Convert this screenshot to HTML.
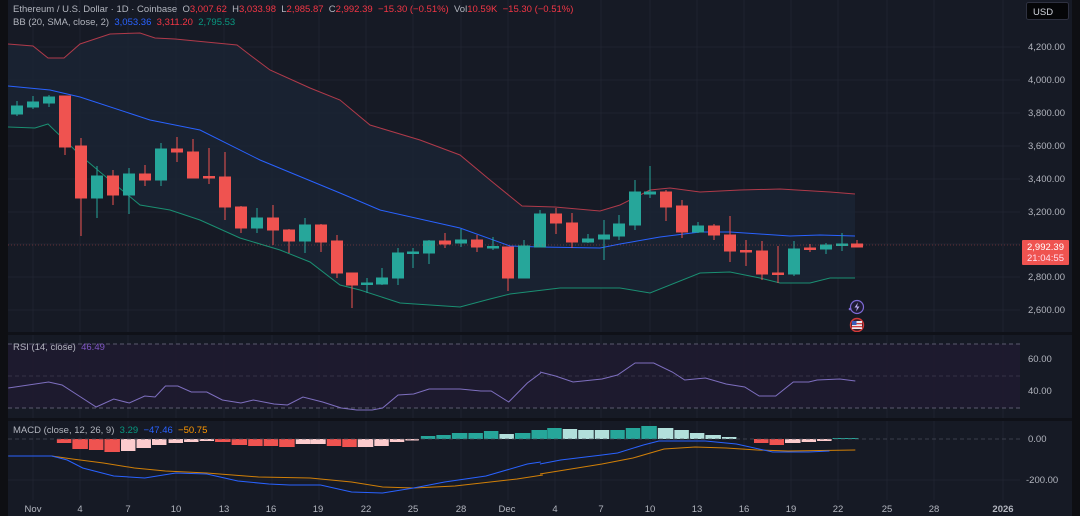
<!DOCTYPE html>
<html><head><meta charset="utf-8"><style>
html,body{margin:0;padding:0;background:#161a25;width:1080px;height:516px;overflow:hidden;font-family:"Liberation Sans",sans-serif}
svg{position:absolute;left:0;top:0}
.t{position:absolute;font-size:9.5px;color:#b2b5be;white-space:nowrap}
.r{color:#f23645}.b{color:#2962ff}.g{color:#089981}.p{color:#7e57c2}.o{color:#ff9800}
</style></head><body>
<svg width="1080" height="516" viewBox="0 0 1080 516" font-family="Liberation Sans" font-size="9.5">
<rect x="0" y="0" width="1080" height="516" fill="#161a25"/>
<g stroke="#1f2330" stroke-width="1">
<line x1="33" y1="0" x2="33" y2="500"/><line x1="80" y1="0" x2="80" y2="500"/><line x1="128" y1="0" x2="128" y2="500"/><line x1="176" y1="0" x2="176" y2="500"/><line x1="224" y1="0" x2="224" y2="500"/><line x1="272" y1="0" x2="272" y2="500"/><line x1="319" y1="0" x2="319" y2="500"/><line x1="366" y1="0" x2="366" y2="500"/><line x1="413" y1="0" x2="413" y2="500"/><line x1="461" y1="0" x2="461" y2="500"/><line x1="508" y1="0" x2="508" y2="500"/><line x1="555" y1="0" x2="555" y2="500"/><line x1="601" y1="0" x2="601" y2="500"/><line x1="650" y1="0" x2="650" y2="500"/><line x1="697" y1="0" x2="697" y2="500"/><line x1="744" y1="0" x2="744" y2="500"/><line x1="791" y1="0" x2="791" y2="500"/><line x1="838" y1="0" x2="838" y2="500"/><line x1="887" y1="0" x2="887" y2="500"/><line x1="934" y1="0" x2="934" y2="500"/><line x1="1003" y1="0" x2="1003" y2="500"/>
<line x1="8" y1="47" x2="1020" y2="47"/><line x1="8" y1="80" x2="1020" y2="80"/><line x1="8" y1="113" x2="1020" y2="113"/><line x1="8" y1="146" x2="1020" y2="146"/><line x1="8" y1="179" x2="1020" y2="179"/><line x1="8" y1="212" x2="1020" y2="212"/><line x1="8" y1="244" x2="1020" y2="244"/><line x1="8" y1="277" x2="1020" y2="277"/><line x1="8" y1="310" x2="1020" y2="310"/>
<line x1="8" y1="480" x2="1020" y2="480"/>
</g>
<polygon fill="#1a2434" fill-opacity="0.85" points="8,44 33,46 48,58 64,58 80,44 110,34 140,33 155,38 175,39 237,45 250,55 270,70 310,88 340,100 370,125 420,140 460,155 490,180 522,206 555,207 600,211 620,205 650,190 670,188 700,192 740,190 780,189 830,192 855,194 855,278 830,278 810,283 780,283 760,278 730,272 700,273 650,293 620,288 560,288 510,294 490,299 460,307 400,303 360,290 340,285 310,262 280,250 240,238 200,220 170,210 140,205 100,172 80,155 48,124 35,128 8,127"/>
<polyline fill="none" stroke="#b03a4a" stroke-width="1" points="8,44 33,46 48,58 64,58 80,44 110,34 140,33 155,38 175,39 237,45 250,55 270,70 310,88 340,100 370,125 420,140 460,155 490,180 522,206 555,207 600,211 620,205 650,190 670,188 700,192 740,190 780,189 830,192 855,194"/>
<polyline fill="none" stroke="#2962ff" stroke-width="1" points="8,86 50,90 80,97 150,120 200,130 260,160 340,193 380,210 460,228 510,246 540,247 600,248 620,244 660,237 700,232 730,232 760,234 790,236 820,235 855,236"/>
<polyline fill="none" stroke="#1a8f72" stroke-width="1" points="8,127 35,128 48,124 80,155 100,172 140,205 170,210 200,220 240,238 280,250 310,262 340,285 360,290 400,303 460,307 490,299 510,294 560,288 620,288 650,293 700,273 730,272 760,278 780,283 810,283 830,278 855,278"/>
<g stroke-width="1">
<g stroke="#26a69a" fill="#26a69a">
<line x1="17" y1="101" x2="17" y2="116"/><rect x="11.5" y="106" width="11" height="8"/>
<line x1="33" y1="96" x2="33" y2="109"/><rect x="27.5" y="102" width="11" height="5"/>
<line x1="49" y1="95" x2="49" y2="107"/><rect x="43.5" y="97" width="11" height="6"/>
<line x1="97" y1="166" x2="97" y2="218"/><rect x="91.5" y="176" width="11" height="22"/>
<line x1="129" y1="168" x2="129" y2="214"/><rect x="123.5" y="174" width="11" height="21"/>
<line x1="161" y1="143" x2="161" y2="186"/><rect x="155.5" y="149" width="11" height="31"/>
<line x1="257" y1="208" x2="257" y2="233"/><rect x="251.5" y="218" width="11" height="10"/>
<line x1="305" y1="218" x2="305" y2="253"/><rect x="299.5" y="225" width="11" height="16"/>
<line x1="367" y1="278" x2="367" y2="293"/><rect x="361.5" y="283" width="11" height="1.5"/>
<line x1="382" y1="268" x2="382" y2="285"/><rect x="376.5" y="278" width="11" height="6"/>
<line x1="398" y1="248" x2="398" y2="285"/><rect x="392.5" y="253" width="11" height="25"/>
<line x1="413" y1="248" x2="413" y2="268"/><rect x="407.5" y="252" width="11" height="1.5"/>
<line x1="429" y1="240" x2="429" y2="264"/><rect x="423.5" y="241" width="11" height="12"/>
<line x1="461" y1="229" x2="461" y2="247"/><rect x="455.5" y="240" width="11" height="3"/>
<line x1="493" y1="237" x2="493" y2="250"/><rect x="487.5" y="246.5" width="11" height="1.5"/>
<line x1="524" y1="240" x2="524" y2="278"/><rect x="518.5" y="246" width="11" height="32"/>
<line x1="540" y1="210" x2="540" y2="247"/><rect x="534.5" y="214" width="11" height="33"/>
<line x1="588" y1="234" x2="588" y2="243"/><rect x="582.5" y="239" width="11" height="3"/>
<line x1="604" y1="220" x2="604" y2="260"/><rect x="598.5" y="235" width="11" height="4"/>
<line x1="619" y1="215" x2="619" y2="240"/><rect x="613.5" y="224" width="11" height="12"/>
<line x1="635" y1="180" x2="635" y2="230"/><rect x="629.5" y="192" width="11" height="33"/>
<line x1="650" y1="166" x2="650" y2="198"/><rect x="644.5" y="192" width="11" height="2"/>
<line x1="698" y1="222" x2="698" y2="233"/><rect x="692.5" y="226" width="11" height="6"/>
<line x1="794" y1="241" x2="794" y2="276"/><rect x="788.5" y="249" width="11" height="25"/>
<line x1="826" y1="243" x2="826" y2="254"/><rect x="820.5" y="245" width="11" height="4"/>
<line x1="842" y1="233" x2="842" y2="251"/><rect x="836.5" y="244" width="11" height="1.5"/>
</g>
<g stroke="#ef5350" fill="#ef5350">
<line x1="65" y1="96" x2="65" y2="155"/><rect x="59.5" y="96" width="11" height="51"/>
<line x1="81" y1="138" x2="81" y2="236"/><rect x="75.5" y="146" width="11" height="52"/>
<line x1="113" y1="170" x2="113" y2="205"/><rect x="107.5" y="176" width="11" height="19"/>
<line x1="145" y1="165" x2="145" y2="186"/><rect x="139.5" y="174" width="11" height="6"/>
<line x1="177" y1="137" x2="177" y2="162"/><rect x="171.5" y="149" width="11" height="3"/>
<line x1="193" y1="139" x2="193" y2="178"/><rect x="187.5" y="152" width="11" height="26"/>
<line x1="209" y1="148" x2="209" y2="184"/><rect x="203.5" y="176.5" width="11" height="1.5"/>
<line x1="225" y1="152" x2="225" y2="220"/><rect x="219.5" y="177" width="11" height="30"/>
<line x1="241" y1="206" x2="241" y2="233"/><rect x="235.5" y="207" width="11" height="21"/>
<line x1="273" y1="205" x2="273" y2="245"/><rect x="267.5" y="218" width="11" height="12"/>
<line x1="289" y1="229" x2="289" y2="253"/><rect x="283.5" y="230" width="11" height="11"/>
<line x1="321" y1="224" x2="321" y2="252"/><rect x="315.5" y="225" width="11" height="17"/>
<line x1="337" y1="235" x2="337" y2="278"/><rect x="331.5" y="241" width="11" height="32"/>
<line x1="352" y1="273" x2="352" y2="308"/><rect x="346.5" y="273" width="11" height="12"/>
<line x1="445" y1="233" x2="445" y2="248"/><rect x="439.5" y="241" width="11" height="3"/>
<line x1="477" y1="235" x2="477" y2="252"/><rect x="471.5" y="240" width="11" height="7"/>
<line x1="508" y1="247" x2="508" y2="291"/><rect x="502.5" y="247" width="11" height="31"/>
<line x1="556" y1="208" x2="556" y2="234"/><rect x="550.5" y="214" width="11" height="9"/>
<line x1="572" y1="213" x2="572" y2="248"/><rect x="566.5" y="223" width="11" height="19"/>
<line x1="666" y1="190" x2="666" y2="221"/><rect x="660.5" y="192" width="11" height="15"/>
<line x1="682" y1="200" x2="682" y2="238"/><rect x="676.5" y="206" width="11" height="26"/>
<line x1="714" y1="224" x2="714" y2="240"/><rect x="708.5" y="226" width="11" height="9"/>
<line x1="730" y1="216" x2="730" y2="262"/><rect x="724.5" y="235" width="11" height="16"/>
<line x1="746" y1="240" x2="746" y2="266"/><rect x="740.5" y="250.5" width="11" height="1.5"/>
<line x1="762" y1="241" x2="762" y2="280"/><rect x="756.5" y="251" width="11" height="23"/>
<line x1="778" y1="246" x2="778" y2="283"/><rect x="772.5" y="273" width="11" height="1.5"/>
<line x1="810" y1="244" x2="810" y2="252"/><rect x="804.5" y="248" width="11" height="1.5"/>
<line x1="857" y1="240" x2="857" y2="247"/><rect x="851.5" y="244" width="11" height="3"/>
</g>
</g>
<line x1="8" y1="245" x2="1020" y2="245" stroke="#ef5350" stroke-opacity="0.35" stroke-dasharray="1 2"/>
<circle cx="857" cy="307" r="6.5" fill="#1e1b33" stroke="#7e6ad6" stroke-width="1.2"/>
<path d="M858 302.5 L854.5 307.5 L857 307.5 L856 311.5 L859.5 306.5 L857 306.5 Z" fill="#b9aaf0"/>
<circle cx="850" cy="309" r="1.3" fill="#7e6ad6"/>
<circle cx="857" cy="325" r="6.5" fill="#3a1e24" stroke="#d33a3a" stroke-width="1.4"/>
<rect x="852" y="321" width="10" height="8" fill="#e8e8f0"/><rect x="852" y="323" width="10" height="1.3" fill="#d04040"/><rect x="852" y="326" width="10" height="1.3" fill="#d04040"/><rect x="852" y="321" width="4.5" height="4" fill="#3a5bb8"/>
<rect x="0" y="332" width="1080" height="3" fill="#0f1118"/>
<rect x="0" y="418" width="1080" height="3" fill="#0f1118"/>
<!-- RSI -->
<rect x="8" y="344" width="1012" height="64" fill="#1e1b30" fill-opacity="0.9"/>
<g stroke="#5a5a6e" stroke-dasharray="4 3" stroke-width="1">
<line x1="8" y1="344" x2="1020" y2="344"/><line x1="8" y1="408" x2="1020" y2="408"/><line x1="8" y1="376" x2="1020" y2="376" stroke-opacity="0.4"/>
</g>
<g transform="matrix(1.034,0,0,1,0,0)">
<polyline fill="none" stroke="#7e6fbf" stroke-width="1" points="8,388 47,382 60,385 78,397 93,407 110,399 125,403 140,396 150,397 160,386 172,386 185,392 200,392 215,400 233,403 245,400 265,404 278,405 293,397 312,402 330,408 345,410 360,410 370,408 385,395 400,394 415,389 445,389 465,391 475,391 492,402 510,383 523,373"/>
<polyline fill="none" stroke="#ff9800" stroke-opacity="0.8" stroke-width="1" points="8,456 50,456 70,459 100,463 130,468 160,471 200,473 250,477 300,478 340,482 370,487 400,488 440,486 500,479 525,475"/>
<polyline fill="none" stroke="#2962ff" stroke-width="1" points="8,456 50,456 65,460 80,468 110,476 140,478 170,473 200,474 230,481 260,484 280,485 310,485 340,492 370,493 400,488 430,482 470,476 510,464 523,462"/>
<g>
<rect x="55" y="439" width="14" height="4" fill="#ef5350"/><rect x="70" y="439" width="15" height="10" fill="#ef5350"/><rect x="86" y="439" width="14" height="11" fill="#ef5350"/><rect x="101" y="439" width="15" height="13" fill="#ef5350"/>
<rect x="117" y="439" width="14" height="12" fill="#fccbcd"/><rect x="132" y="439" width="14" height="9" fill="#fccbcd"/><rect x="147" y="439" width="14" height="6" fill="#fccbcd"/><rect x="163" y="439" width="14" height="4" fill="#fccbcd"/><rect x="178" y="439" width="14" height="3" fill="#fccbcd"/><rect x="193" y="439" width="14" height="2" fill="#fccbcd"/>
<rect x="208" y="439" width="15" height="3" fill="#ef5350"/><rect x="224" y="439" width="15" height="6" fill="#ef5350"/><rect x="240" y="439" width="14" height="7" fill="#ef5350"/><rect x="255" y="439" width="14" height="7" fill="#ef5350"/><rect x="270" y="439" width="15" height="8" fill="#ef5350"/>
<rect x="286" y="439" width="14" height="5" fill="#fccbcd"/><rect x="300" y="439" width="15" height="5" fill="#fccbcd"/>
<rect x="316" y="439" width="14" height="7" fill="#ef5350"/><rect x="331" y="439" width="14" height="8" fill="#ef5350"/>
<rect x="346" y="439" width="15" height="8" fill="#fccbcd"/><rect x="362" y="439" width="14" height="7" fill="#fccbcd"/><rect x="377" y="439" width="14" height="3" fill="#fccbcd"/><rect x="392" y="439" width="13" height="1.5" fill="#fccbcd"/>
<rect x="407" y="436" width="14" height="3" fill="#26a69a"/><rect x="422" y="435" width="14" height="4" fill="#26a69a"/><rect x="437" y="433" width="15" height="6" fill="#26a69a"/><rect x="453" y="433" width="14" height="6" fill="#26a69a"/><rect x="468" y="431" width="14" height="8" fill="#26a69a"/>
<rect x="483" y="434" width="14" height="5" fill="#b2dfdb"/><rect x="498" y="433" width="15" height="6" fill="#26a69a"/><rect x="514" y="430" width="15" height="9" fill="#26a69a"/>
</g>
</g>
<g transform="matrix(1.034,0,0,1,-18.4,0)">
<polyline fill="none" stroke="#7e6fbf" stroke-width="1" points="540,372 555,376 572,382 600,379 615,375 632,363 650,363 668,372 680,380 700,378 720,384 738,387 752,396 768,396 785,382 800,382 808,380 830,379 845,381"/>
<g fill="#26a69a">
<rect x="532" y="431" width="14" height="8"/><rect x="547" y="428" width="14" height="11"/>
<rect x="562" y="429" width="14" height="10" fill="#b2dfdb"/><rect x="577" y="430" width="15" height="9" fill="#b2dfdb"/><rect x="593" y="430" width="14" height="9" fill="#b2dfdb"/>
<rect x="608" y="430" width="14" height="9"/><rect x="623" y="428" width="14" height="11"/><rect x="638" y="426" width="15" height="13"/>
<rect x="654" y="428" width="15" height="11" fill="#b2dfdb"/><rect x="670" y="430" width="14" height="9" fill="#b2dfdb"/><rect x="685" y="433" width="14" height="6" fill="#b2dfdb"/><rect x="700" y="435" width="15" height="4" fill="#b2dfdb"/><rect x="716" y="437" width="14" height="2" fill="#b2dfdb"/>
<rect x="747" y="439" width="14" height="4" fill="#ef5350"/><rect x="762" y="439" width="14" height="6" fill="#ef5350"/><rect x="777" y="439" width="15" height="4" fill="#fccbcd"/><rect x="793" y="439" width="14" height="3" fill="#fccbcd"/><rect x="808" y="439" width="14" height="2" fill="#fccbcd"/>
<rect x="823" y="438" width="25" height="1"/>
</g>
<polyline fill="none" stroke="#ff9800" stroke-opacity="0.8" stroke-width="1" points="540,474 570,469 600,464 630,458 660,449 690,447 720,448 750,450 780,451 845,450"/>
<polyline fill="none" stroke="#2962ff" stroke-width="1" points="540,464 560,460 600,455 615,453 640,445 655,441 680,441 700,441 730,444 765,452 800,452 820,451"/>
</g>
<line x1="8" y1="439" x2="1020" y2="439" stroke="#4a4e5a" stroke-dasharray="4 3" stroke-opacity="0.7"/>
<rect x="0" y="0" width="8" height="516" fill="#0e0f13"/>
<rect x="1072" y="0" width="8" height="516" fill="#0e0f13"/>
<g fill="#b2b5be" font-size="9.5">
<text x="1028" y="50">4,200.00</text><text x="1028" y="83">4,000.00</text><text x="1028" y="116">3,800.00</text><text x="1028" y="149">3,600.00</text><text x="1028" y="182">3,400.00</text><text x="1028" y="215">3,200.00</text><text x="1028" y="280">2,800.00</text><text x="1028" y="313">2,600.00</text>
<text x="1028" y="362">60.00</text><text x="1028" y="394">40.00</text><text x="1028" y="442">0.00</text><text x="1026" y="483">-200.00</text>
</g>
<rect x="1022" y="240" width="47" height="25" fill="#ef5350" rx="1"/>
<text x="1027" y="250" fill="#fff" font-size="9.5">2,992.39</text>
<text x="1027" y="261" fill="#fde" font-size="9.5">21:04:55</text>
<rect x="1026.5" y="2.5" width="42" height="17" rx="2" fill="#050608" stroke="#2e3140"/>
<text x="1033" y="15" fill="#d1d4dc" font-size="9.5">USD</text>
<g fill="#b2b5be" font-size="9.5" text-anchor="middle">
<text x="33" y="512">Nov</text><text x="80" y="512">4</text><text x="128" y="512">7</text><text x="176" y="512">10</text><text x="224" y="512">13</text><text x="271" y="512">16</text><text x="318" y="512">19</text><text x="366" y="512">22</text><text x="413" y="512">25</text><text x="461" y="512">28</text><text x="507" y="512">Dec</text><text x="555" y="512">4</text><text x="601" y="512">7</text><text x="650" y="512">10</text><text x="697" y="512">13</text><text x="744" y="512">16</text><text x="791" y="512">19</text><text x="838" y="512">22</text><text x="887" y="512">25</text><text x="934" y="512">28</text><text x="1003" y="512" font-weight="bold">2026</text>
</g>
</svg>
<div class="t" style="left:13px;top:4px">Ethereum / U.S. Dollar · 1D · Coinbase&nbsp; O<span class="r">3,007.62</span>&nbsp; H<span class="r">3,033.98</span>&nbsp; L<span class="r">2,985.87</span>&nbsp; C<span class="r">2,992.39</span>&nbsp; <span class="r">−15.30 (−0.51%)</span>&nbsp; Vol<span class="r">10.59K</span>&nbsp; <span class="r">−15.30 (−0.51%)</span></div>
<div class="t" style="left:13px;top:17px">BB (20, SMA, close, 2)&nbsp; <span class="b">3,053.36</span>&nbsp; <span class="r">3,311.20</span>&nbsp; <span class="g">2,795.53</span></div>
<div class="t" style="left:13px;top:342px">RSI (14, close)&nbsp; <span class="p">46.49</span></div>
<div class="t" style="left:13px;top:425px">MACD (close, 12, 26, 9)&nbsp; <span class="g">3.29</span>&nbsp; <span class="b">−47.46</span>&nbsp; <span class="o">−50.75</span></div>
</body></html>
